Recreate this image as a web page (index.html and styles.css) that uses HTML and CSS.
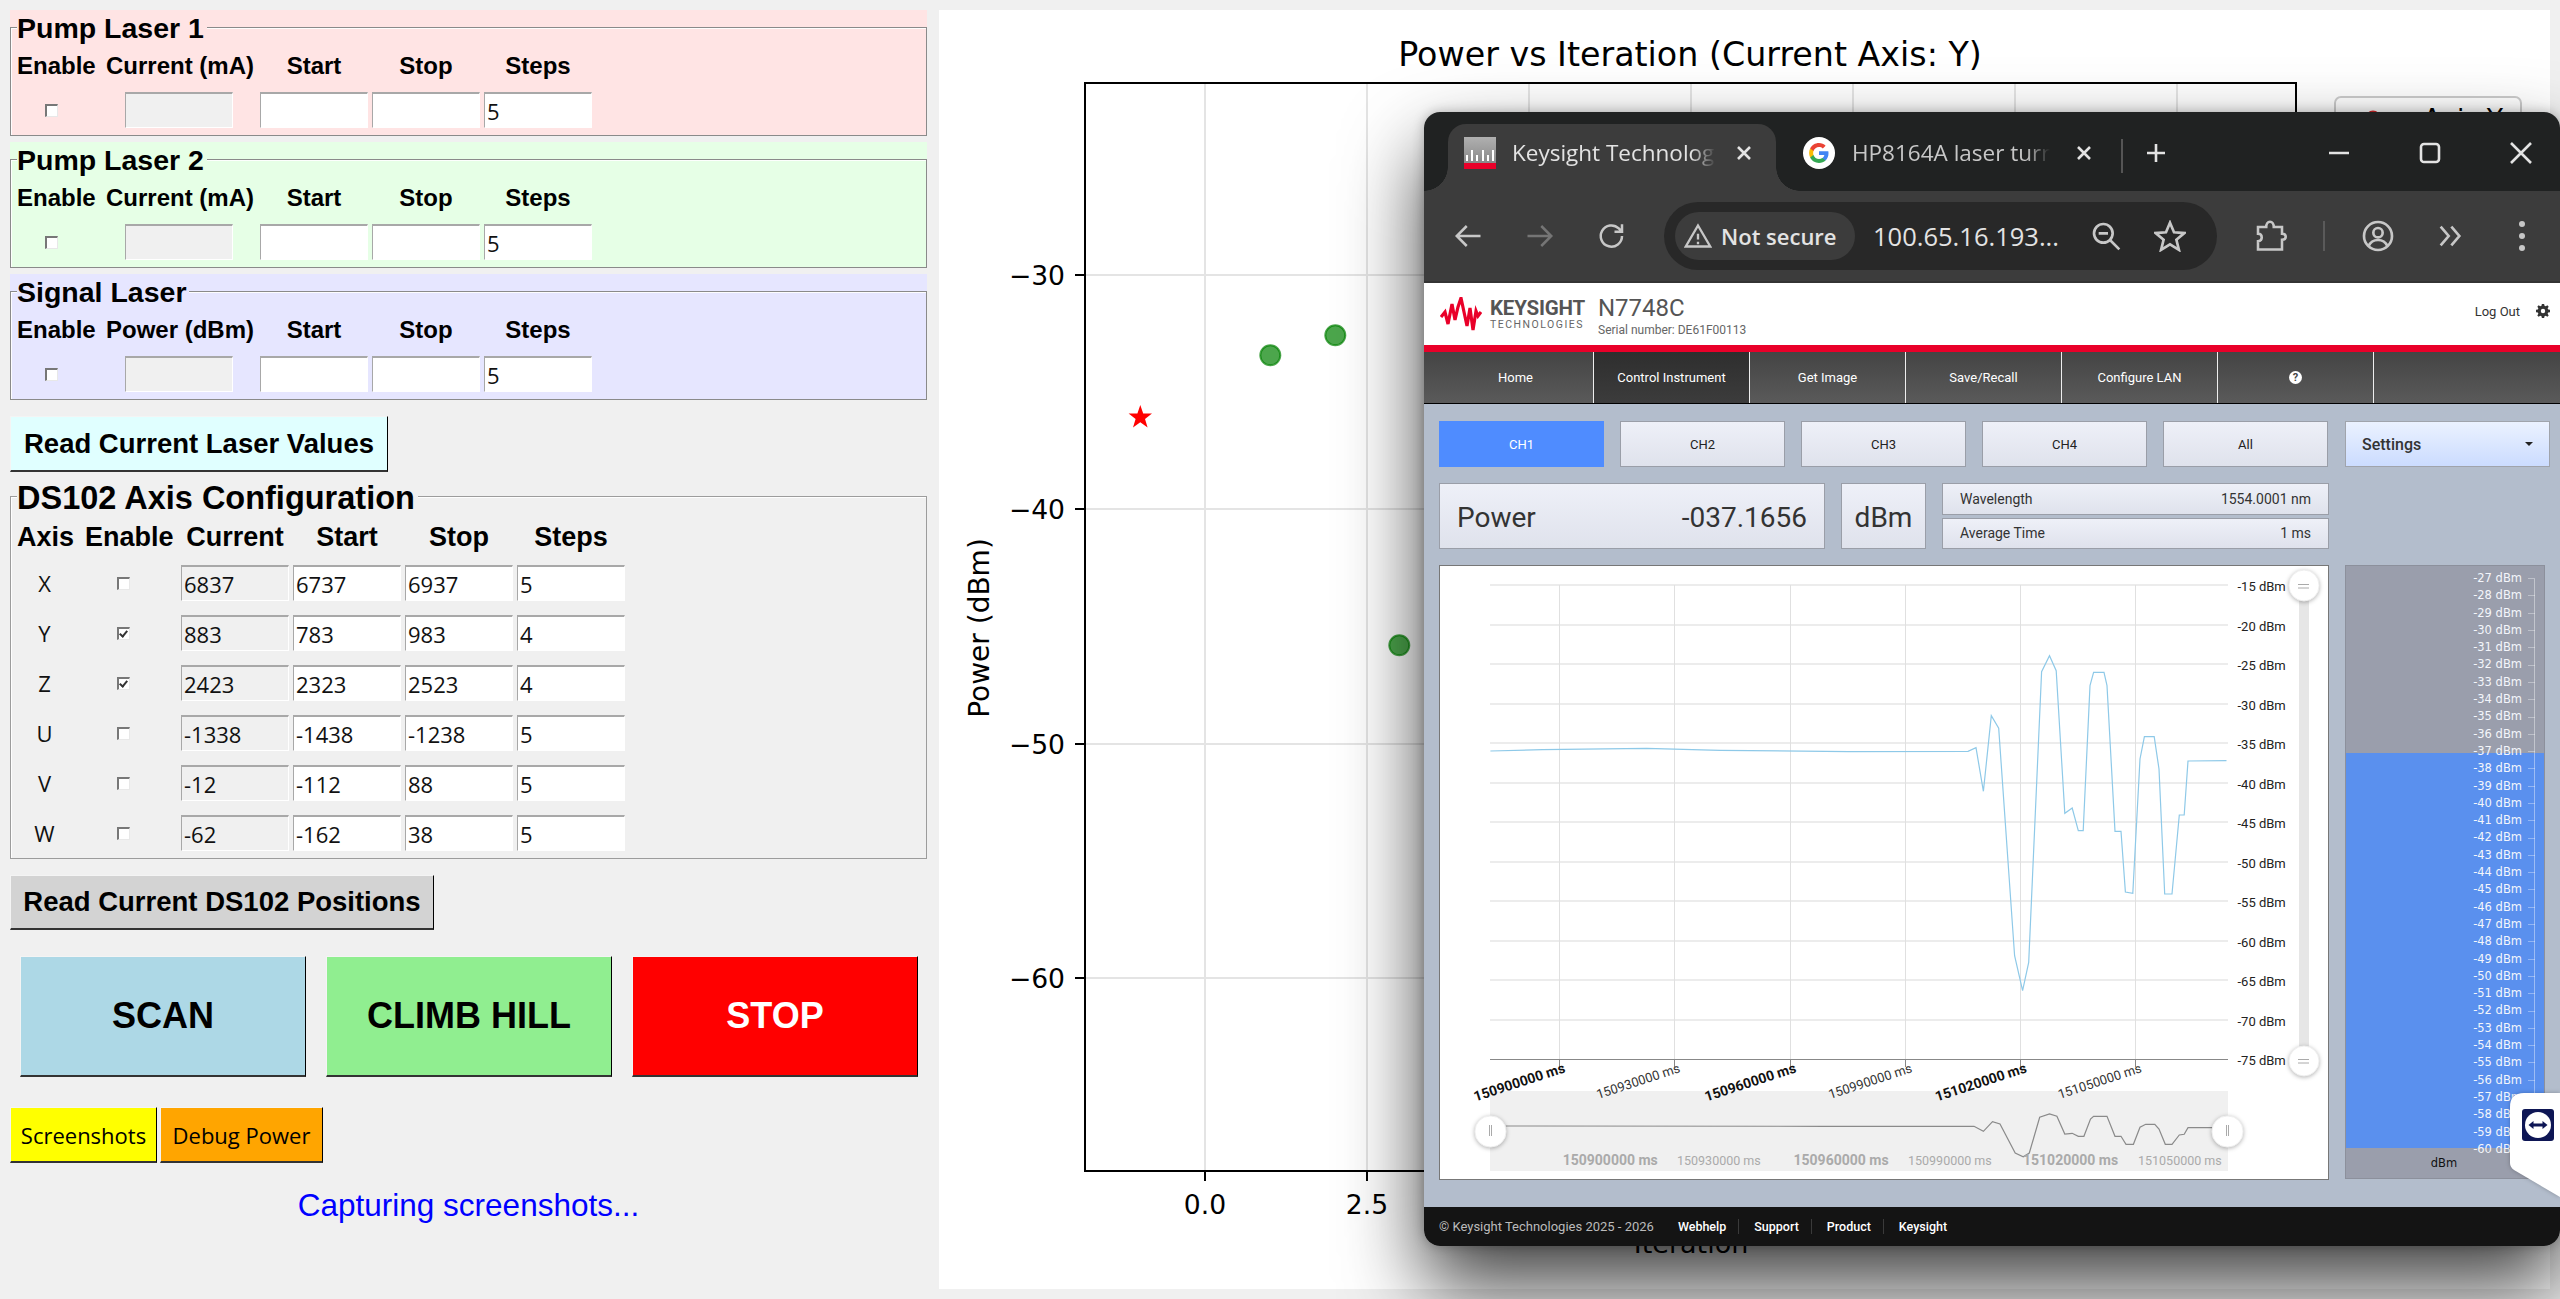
FILE: index.html
```html
<!DOCTYPE html>
<html>
<head>
  <title>Laser Control</title>
  <link rel="stylesheet" href="styles.css">
</head>
<body>
  <div class="panel">
    <div class="frame pump1">
      <div class="group">
        <div class="group-title">Pump Laser 1</div>
        <div class="laser-grid">
          <div class="head left">Enable</div><div class="head left">Current (mA)</div><div class="head">Start</div><div class="head">Stop</div><div class="head">Steps</div>
          <div class="chk"></div><div class="entry off current"></div><div class="entry"></div><div class="entry"></div><div class="entry">5</div>
        </div>
      </div>
    </div>
    <div class="frame pump2">
      <div class="group">
        <div class="group-title">Pump Laser 2</div>
        <div class="laser-grid">
          <div class="head left">Enable</div><div class="head left">Current (mA)</div><div class="head">Start</div><div class="head">Stop</div><div class="head">Steps</div>
          <div class="chk"></div><div class="entry off current"></div><div class="entry"></div><div class="entry"></div><div class="entry">5</div>
        </div>
      </div>
    </div>
    <div class="frame signal">
      <div class="group">
        <div class="group-title">Signal Laser</div>
        <div class="laser-grid">
          <div class="head left">Enable</div><div class="head left">Power (dBm)</div><div class="head">Start</div><div class="head">Stop</div><div class="head">Steps</div>
          <div class="chk"></div><div class="entry off current"></div><div class="entry"></div><div class="entry"></div><div class="entry">5</div>
        </div>
      </div>
    </div>

    <button class="btn read-laser">Read Current Laser Values</button>

    <div class="frame axes">
      <div class="group">
        <div class="group-title big">DS102 Axis Configuration</div>
        <div class="axis-grid">
          <div class="head left">Axis</div><div class="head left enable-head">Enable</div><div class="head">Current</div><div class="head">Start</div><div class="head">Stop</div><div class="head">Steps</div>

          <div class="axis-name">X</div><div class="chk"></div><div class="entry off">6837</div><div class="entry">6737</div><div class="entry">6937</div><div class="entry">5</div>
          <div class="axis-name">Y</div><div class="chk checked"></div><div class="entry off">883</div><div class="entry">783</div><div class="entry">983</div><div class="entry">4</div>
          <div class="axis-name">Z</div><div class="chk checked"></div><div class="entry off">2423</div><div class="entry">2323</div><div class="entry">2523</div><div class="entry">4</div>
          <div class="axis-name">U</div><div class="chk"></div><div class="entry off">-1338</div><div class="entry">-1438</div><div class="entry">-1238</div><div class="entry">5</div>
          <div class="axis-name">V</div><div class="chk"></div><div class="entry off">-12</div><div class="entry">-112</div><div class="entry">88</div><div class="entry">5</div>
          <div class="axis-name">W</div><div class="chk"></div><div class="entry off">-62</div><div class="entry">-162</div><div class="entry">38</div><div class="entry">5</div>
        </div>
      </div>
    </div>

    <button class="btn read-axes">Read Current DS102 Positions</button>

    <div class="big-buttons">
      <button class="btn big scan">SCAN</button>
      <button class="btn big climb">CLIMB HILL</button>
      <button class="btn big stop">STOP</button>
    </div>

    <div class="small-buttons">
      <button class="btn small shots">Screenshots</button>
      <button class="btn small debug">Debug Power</button>
    </div>

    <div class="status">Capturing screenshots...</div>
  </div>

  <div class="plot">
    <svg class="plot-svg" viewBox="939 10 1611 1279" width="1611" height="1279">
      <g class="grid">
        <path d="M1205 83V1171M1367 83V1171M1529 83V1171M1691 83V1171M1853 83V1171M2015 83V1171M2177 83V1171"/>
        <path d="M1085 275H2296M1085 509H2296M1085 744H2296M1085 978H2296"/>
      </g>
      <rect class="axes-box" x="1085" y="83" width="1211" height="1088"/>
      <path class="axes-tick" d="M1075 275H1085M1075 509H1085M1075 744H1085M1075 978H1085M1205 1171V1181M1367 1171V1181"/>
      <text class="plot-title" x="1690" y="66">Power vs Iteration (Current Axis: Y)</text>
      <text class="tick-y" x="1065" y="285">−30</text>
      <text class="tick-y" x="1065" y="519">−40</text>
      <text class="tick-y" x="1065" y="754">−50</text>
      <text class="tick-y" x="1065" y="988">−60</text>
      <text class="tick-x" x="1205" y="1214">0.0</text>
      <text class="tick-x" x="1367" y="1214">2.5</text>
      <text class="plot-ylabel" transform="rotate(-90 989 628)" x="989" y="628">Power (dBm)</text>
      <text class="plot-xlabel" x="1691" y="1253">Iteration</text>
      <circle class="pt" cx="1270.3" cy="355.3" r="10"/>
      <circle class="pt" cx="1335.3" cy="335.3" r="10"/>
      <circle class="pt" cx="1399.3" cy="645.3" r="10"/>
      <polygon class="best" points="1140.3,405 1143.2,413.5 1152,413.5 1145,418.9 1147.6,427.5 1140.3,422.3 1133,427.5 1135.6,418.9 1128.6,413.5 1137.4,413.5"/>
      <rect class="legend-box" x="2335" y="97" width="186" height="70" rx="6"/>
      <circle class="legend-dot" cx="2373" cy="118" r="7.5"/>
      <text class="legend-text" x="2423" y="127.6">Axis Y</text>
    </svg>
  </div>

  <div class="window">
    <div class="tabstrip">
      <div class="tab active">
        <div class="favicon"><span></span><span></span><span></span><span></span><span></span><span></span></div>
        <div class="tab-title">Keysight Technologies</div>
        <svg class="tab-x" viewBox="0 0 16 16"><path d="M2 2L14 14M14 2L2 14"/></svg>
      </div>
      <div class="tab">
        <svg class="g-icon" viewBox="0 0 32 32">
          <circle cx="16" cy="16" r="16" fill="#fff"/>
          <g transform="translate(5.2 5.2) scale(.9)">
            <path fill="#4285F4" d="M22.56 12.25c0-.78-.07-1.53-.2-2.25H12v4.26h5.92c-.26 1.37-1.04 2.53-2.21 3.31v2.77h3.57c2.08-1.92 3.28-4.74 3.28-8.09z"/>
            <path fill="#34A853" d="M12 23c2.97 0 5.46-.98 7.28-2.66l-3.57-2.77c-.98.66-2.23 1.06-3.71 1.06-2.86 0-5.29-1.93-6.16-4.53H2.18v2.84C3.99 20.53 7.7 23 12 23z"/>
            <path fill="#FBBC05" d="M5.84 14.09c-.22-.66-.35-1.36-.35-2.09s.13-1.43.35-2.09V7.07H2.18C1.43 8.55 1 10.22 1 12s.43 3.45 1.18 4.93l2.85-2.22.81-.62z"/>
            <path fill="#EA4335" d="M12 5.38c1.62 0 3.06.56 4.21 1.64l3.15-3.15C17.45 2.09 14.97 1 12 1 7.7 1 3.99 3.47 2.18 7.07l3.66 2.84c.87-2.6 3.3-4.53 6.16-4.53z"/>
          </g>
        </svg>
        <div class="tab-title dim">HP8164A laser turn on</div>
        <svg class="tab-x" viewBox="0 0 16 16"><path d="M2 2L14 14M14 2L2 14"/></svg>
      </div>
      <div class="tab-sep"></div>
      <svg class="plus" viewBox="0 0 20 20"><path d="M10 1V19M1 10H19"/></svg>
      <div class="win-btns">
        <div class="win-btn"><svg viewBox="0 0 20 20"><path d="M0 10H20"/></svg></div>
        <div class="win-btn"><svg viewBox="0 0 20 20"><rect x="1" y="1" width="18" height="18" rx="3"/></svg></div>
        <div class="win-btn"><svg viewBox="0 0 20 20"><path d="M0 0L20 20M20 0L0 20"/></svg></div>
      </div>
    </div>

    <div class="toolbar">
      <div class="tool"><svg viewBox="0 0 24 24"><path d="M22 12H3M11 4L3 12L11 20"/></svg></div>
      <div class="tool faint"><svg viewBox="0 0 24 24"><path d="M2 12H21M13 4L21 12L13 20"/></svg></div>
      <div class="tool"><svg viewBox="0 0 24 24"><path d="M20 12a8.500 8.500 0 1 1-2.600-6.100L20 8.500M20 2.500V8.500H14"/></svg></div>
      <div class="omnibox">
        <div class="chip">
          <svg viewBox="0 0 24 24"><path d="M12 3L22.500 21H1.500Z"/><path d="M12 10V15M12 17V19"/></svg>
          <span>Not secure</span>
        </div>
        <div class="url">100.65.16.193...</div>
        <div class="omni-btn"><svg class="ico-32" viewBox="0 0 24 24"><circle cx="10" cy="10" r="7"/><path d="M15 15L22 22M6.500 10H13.500"/></svg></div>
        <div class="omni-btn"><svg class="ico-32" viewBox="0 0 24 24"><path d="M12 2L15 9.200L22.800 9.800L16.800 14.800L18.700 22.400L12 18.300L5.300 22.400L7.200 14.800L1.200 9.800L9 9.200Z"/></svg></div>
      </div>
      <div class="tool ext"><svg class="ico-36" viewBox="0 0 24 24"><path d="M4 6H9.500C9.500 4 10.500 2.500 12 2.500S14.500 4 14.500 6H20V10.500C22 10.500 22.500 11.300 22.500 12.500S22 14.500 20 14.500V21H4V15.500C6 15.500 6.500 14 6.500 13S6 10.500 4 10.500Z"/></svg></div>
      <div class="tool-sep"></div>
      <div class="tool"><svg class="ico-32" viewBox="0 0 24 24"><circle cx="12" cy="12" r="10.500"/><circle cx="12" cy="9.500" r="3.500"/><path d="M5 19.500C6.500 16 9 15 12 15S17.500 16 19 19.500"/></svg></div>
      <div class="tool"><svg class="ico-32" viewBox="0 0 24 24"><path d="M5 5L11 12L5 19M13 5L19 12L13 19"/></svg></div>
      <div class="tool"><svg class="ico-36" viewBox="0 0 24 24"><circle class="solid" cx="12" cy="4" r="2"/><circle class="solid" cx="12" cy="12" r="2"/><circle class="solid" cx="12" cy="20" r="2"/></svg></div>
    </div>

    <div class="page">
      <div class="ks-header">
        <svg class="ks-logo" viewBox="0 0 42 36"><path d="M1 20L5 15L8 27L12 7L15 23L18 10L21 1L24 15L27 29L30 11L33 33L36 14L38 19L41 15"/></svg>
        <div class="ks-brand">
          <div class="ks-name">KEYSIGHT</div>
          <div class="ks-sub">TECHNOLOGIES</div>
        </div>
        <div class="ks-model">
          <div class="ks-n">N7748C</div>
          <div class="ks-serial">Serial number: DE61F00113</div>
        </div>
        <div class="ks-logout">Log Out</div>
        <svg class="ks-gear" viewBox="0 0 16 16"><path d="M6.700 0H9.300L9.700 2.100L11.200 2.700L13 1.500L14.500 3L13.300 4.800L13.900 6.300L16 6.700V9.300L13.900 9.700L13.300 11.200L14.500 13L13 14.500L11.200 13.300L9.700 13.900L9.300 16H6.700L6.300 13.900L4.800 13.300L3 14.500L1.500 13L2.700 11.200L2.100 9.700L0 9.300V6.700L2.100 6.300L2.700 4.800L1.500 3L3 1.500L4.800 2.700L6.300 2.100ZM8 5.500A2.500 2.500 0 1 0 8 10.500A2.500 2.500 0 1 0 8 5.500Z" fill-rule="evenodd"/></svg>
      </div>

      <div class="ks-nav">
        <div class="nav-item home">Home</div>
        <div class="nav-item on">Control Instrument</div>
        <div class="nav-item">Get Image</div>
        <div class="nav-item">Save/Recall</div>
        <div class="nav-item">Configure LAN</div>
        <div class="nav-item"><span class="help">?</span></div>
        <div class="nav-rest"></div>
      </div>

      <div class="ks-main">
        <div class="channels">
          <div class="ch on">CH1</div>
          <div class="ch">CH2</div>
          <div class="ch">CH3</div>
          <div class="ch">CH4</div>
          <div class="ch">All</div>
        </div>
        <div class="settings"><span>Settings</span><span class="caret"></span></div>

        <div class="readout">
          <div class="box power"><span>Power</span><span>-037.1656</span></div>
          <div class="box unit">dBm</div>
          <div class="info">
            <div class="box info-row"><span>Wavelength</span><span>1554.0001 nm</span></div>
            <div class="box info-row"><span>Average Time</span><span>1 ms</span></div>
          </div>
        </div>
        <div class="gap-cell"></div>

        <div class="chart">
          <svg viewBox="1440 567 888 613" width="888" height="613">
            <path class="chart-grid" d="M1490 586H2228M1490 626H2228M1490 665H2228M1490 705H2228M1490 744H2228M1490 784H2228M1490 823H2228M1490 863H2228M1490 902H2228M1490 942H2228M1490 981H2228M1490 1021H2228"/>
            <path class="chart-vgrid" d="M1559.500 586V1060M1674.500 586V1060M1790.500 586V1060M1905.500 586V1060M2020.500 586V1060M2135.500 586V1060"/>
            <path class="chart-axis" d="M1490 1060.500H2228M1559.500 1060V1068M1674.500 1060V1068M1790.500 1060V1068M1905.500 1060V1068M2020.500 1060V1068M2135.500 1060V1068"/>
            <polyline class="curve" points="1490.400,752 1542.500,750.700 1646.600,749.300 1720,751.300 1848.700,752.700 1968,752.300 1976,748.700 1983.400,792.300 1991.300,716.700 1998.700,729.300 2014.600,956.700 2022.600,991.700 2028.700,963.300 2032.400,880 2041.600,672.700 2049.500,656.700 2056.200,671.700 2064.800,814.300 2072.200,809 2078.300,831.700 2083.200,831.700 2090,686.700 2093.600,673.300 2104,673.300 2107,686.700 2115,832.300 2121,832.300 2125.400,893 2132.800,894.300 2140,760 2144.400,737.700 2154.200,737.700 2159,770 2164.700,895 2172,895 2179.300,816 2184.200,816 2188,762 2226.500,761.700"/>
            <text class="y-label" x="2237.500" y="592">-15 dBm</text>
            <text class="y-label" x="2237.500" y="632">-20 dBm</text>
            <text class="y-label" x="2237.500" y="671">-25 dBm</text>
            <text class="y-label" x="2237.500" y="711">-30 dBm</text>
            <text class="y-label" x="2237.500" y="750">-35 dBm</text>
            <text class="y-label" x="2237.500" y="790">-40 dBm</text>
            <text class="y-label" x="2237.500" y="829">-45 dBm</text>
            <text class="y-label" x="2237.500" y="869">-50 dBm</text>
            <text class="y-label" x="2237.500" y="908">-55 dBm</text>
            <text class="y-label" x="2237.500" y="948">-60 dBm</text>
            <text class="y-label" x="2237.500" y="987">-65 dBm</text>
            <text class="y-label" x="2237.500" y="1027">-70 dBm</text>
            <text class="y-label" x="2237.500" y="1066">-75 dBm</text>

            <rect class="slider-track" x="2299" y="590" width="10" height="470"/>
            <rect class="thumb" x="2289" y="571" width="30" height="31" rx="15"/>
            <rect class="thumb" x="2289" y="1047" width="30" height="30" rx="15"/>
            <path class="thumb-mark" d="M2298 585.500H2309M2298 589H2309M2298 1060.500H2309M2298 1064H2309"/>

            <rect class="navigator" x="1490" y="1092" width="738" height="80"/>
            <polyline class="mini" points="1505.700,1127 1824,1127.300 1974,1127.300 1983.400,1132.300 1992.500,1122.700 2000,1125 2015.200,1154 2023.200,1157.700 2029.300,1154 2039.700,1118.300 2049.500,1115 2056.900,1117.300 2064.800,1135 2072.200,1134.300 2078.300,1137.300 2083.900,1137.300 2090.500,1120 2093.600,1117.300 2107,1117.300 2115,1137.300 2121,1137.300 2126,1145.300 2133.400,1145.300 2140,1128.300 2145.700,1125.300 2154.800,1125.300 2159,1130 2165.300,1145.300 2172,1145.300 2179.300,1136 2184.200,1135.300 2188,1128.700 2213,1128.700"/>
            <text class="nav-label bold" x="1562.700" y="1166">150900000 ms</text>
            <text class="nav-label" x="1677" y="1166">150930000 ms</text>
            <text class="nav-label bold" x="1793.500" y="1166">150960000 ms</text>
            <text class="nav-label" x="1908" y="1166">150990000 ms</text>
            <text class="nav-label bold" x="2023" y="1166">151020000 ms</text>
            <text class="nav-label" x="2138" y="1166">151050000 ms</text>
            <rect class="thumb" x="1475" y="1117" width="31" height="31" rx="15"/>
            <rect class="thumb" x="2212" y="1117" width="31" height="31" rx="15"/>
            <path class="thumb-mark" d="M1489.500 1126V1137M1491.500 1126V1137M2226.500 1126V1137M2228.500 1126V1137"/>

            <text class="x-label bold" transform="rotate(-18 1566 1073)" x="1566" y="1073">150900000 ms</text>
            <text class="x-label" transform="rotate(-18 1681 1073)" x="1681" y="1073">150930000 ms</text>
            <text class="x-label bold" transform="rotate(-18 1797 1073)" x="1797" y="1073">150960000 ms</text>
            <text class="x-label" transform="rotate(-18 1913 1073)" x="1913" y="1073">150990000 ms</text>
            <text class="x-label bold" transform="rotate(-18 2027.500 1073)" x="2027.500" y="1073">151020000 ms</text>
            <text class="x-label" transform="rotate(-18 2142.500 1073)" x="2142.500" y="1073">151050000 ms</text>
          </svg>
        </div>

        <div class="meter">
          <div class="meter-fill"></div>
          <ul class="scale">
            <li>-27 dBm</li><li>-28 dBm</li><li>-29 dBm</li><li>-30 dBm</li><li>-31 dBm</li><li>-32 dBm</li>
            <li>-33 dBm</li><li>-34 dBm</li><li>-35 dBm</li><li>-36 dBm</li><li>-37 dBm</li><li>-38 dBm</li>
            <li>-39 dBm</li><li>-40 dBm</li><li>-41 dBm</li><li>-42 dBm</li><li>-43 dBm</li><li>-44 dBm</li>
            <li>-45 dBm</li><li>-46 dBm</li><li>-47 dBm</li><li>-48 dBm</li><li>-49 dBm</li><li>-50 dBm</li>
            <li>-51 dBm</li><li>-52 dBm</li><li>-53 dBm</li><li>-54 dBm</li><li>-55 dBm</li><li>-56 dBm</li>
            <li>-57 dBm</li><li>-58 dBm</li><li>-59 dBm</li><li>-60 dBm</li>
          </ul>
          <div class="meter-unit">dBm</div>
        </div>
      </div>

      <div class="ks-footer">
        <span class="copy">© Keysight Technologies 2025 - 2026</span>
        <span class="flink">Webhelp</span>
        <span class="flink">Support</span>
        <span class="flink">Product</span>
        <span class="flink last">Keysight</span>
      </div>
    </div>
  </div>

  <svg class="tv-tab" viewBox="0 0 50 104" width="50" height="104">
    <path d="M50 0H14Q0 0 0 14V70Q0 74 4 77L50 104Z" fill="#fff"/>
    <rect x="12" y="16" width="32" height="32" rx="3" fill="#0e1655"/>
    <circle cx="28" cy="32" r="13" fill="#fff"/>
    <path d="M18.500 32L23.500 28V30.500H32.500V28L37.500 32L32.500 36V33.500H23.500V36Z" fill="#0e1655"/>
  </svg>
</body>
</html>
```

FILE: styles.css
```css
body {
  margin: 0;
  width: 2560px;
  height: 1299px;
  overflow: hidden;
  display: flex;
  background-color: #f0f0f0;
  font-family: "Liberation Sans", Arial, sans-serif;
  position: relative;
}

.panel {
  width: 917px;
  margin: 10px 12px 0 10px;
  flex: none;
}

/* laser frames */
.frame {
  padding-top: 17px;
  margin-bottom: 6px;
}

.pump1 { background-color: #ffe4e4; }
.pump2 { background-color: #e6ffe6; }
.signal { background-color: #e6e6ff; }

.group {
  border: 1px solid #8a8a8a;
  box-shadow: inset 1px 1px 0 rgba(255, 255, 255, .9);
  background-color: inherit;
  padding: 1px 0 7px 6px;
}

.frame .group { background: inherit; }

.group-title {
  font-size: 28.5px;
  font-weight: bold;
  line-height: 36px;
  margin: -19px 0 4px 0;
  width: fit-content;
  background: inherit;
  padding-right: 3px;
}

.group-title.big {
  font-size: 32.5px;
  line-height: 40px;
  margin: -20px 0 0 0;
  background-color: #f0f0f0;
}

.axes { padding-top: 0; margin-top: 24px; margin-bottom: 0; }
.axes .group { border-color: #9c9c9c; }

.laser-grid {
  display: grid;
  grid-template-columns: 85px 150px 108px 108px 108px;
  column-gap: 4px;
  row-gap: 10px;
  grid-template-rows: 32px 36px;
}

.axis-grid {
  display: grid;
  grid-template-columns: 55px 101px 108px 108px 108px 108px;
  column-gap: 4px;
  row-gap: 14px;
  grid-template-rows: 33px repeat(6, 36px);
}

.axis-grid .enable-head { padding-left: 9px; }

.head {
  font-size: 24px;
  font-weight: bold;
  text-align: center;
  line-height: 32px;
  white-space: nowrap;
}

.axis-grid .head { font-size: 27px; line-height: 38px; }
.head.left { text-align: left; }

.entry {
  box-sizing: border-box;
  height: 36px;
  background-color: #fff;
  border: 1px solid #fff;
  border-top: 2px solid #a8a8a8;
  border-left: 1px solid #a8a8a8;
  font-family: "Open Sans", sans-serif;
  font-size: 22px;
  line-height: 34px;
  padding-left: 2px;
  color: #111;
}

.entry.off { background-color: #f0f0f0; }
.entry.current { width: 108px; margin-left: 19px; }

.chk {
  box-sizing: border-box;
  width: 13px;
  height: 13px;
  align-self: center;
  margin-left: 28px;
  background-color: #fff;
  border-top: 2px solid #777;
  border-left: 2px solid #777;
  border-right: 1px solid #e8e8e8;
  border-bottom: 1px solid #e8e8e8;
}

.axis-grid .chk {
  margin-left: 41px;
  align-self: start;
  margin-top: 12px;
}

.chk.checked {
  position: relative;
}

.chk.checked::after {
  content: "";
  position: absolute;
  left: 2px;
  top: 0;
  width: 3px;
  height: 6px;
  border-right: 2px solid #333;
  border-bottom: 2px solid #333;
  transform: rotate(40deg);
}

.axis-name {
  font-family: "Open Sans", sans-serif;
  font-size: 22px;
  text-align: center;
  line-height: 36px;
  color: #111;
}

/* tk style buttons */
.btn {
  display: block;
  box-sizing: border-box;
  padding: 0;
  border-style: solid;
  border-width: 1px 1px 2px 1px;
  border-color: #f4f4f4 #000 #333 #f4f4f4;
  font-family: "Liberation Sans", Arial, sans-serif;
  color: #000;
}

.read-laser {
  width: 378px;
  height: 56px;
  margin-top: 16px;
  font-size: 27.5px;
  font-weight: bold;
  background-color: #e0ffff;
}

.read-axes {
  width: 424px;
  height: 55px;
  margin-top: 16px;
  font-size: 27.5px;
  font-weight: bold;
  background-color: #d3d3d3;
}

.big-buttons {
  display: flex;
  gap: 20px;
  margin: 26px 0 0 10px;
}

.btn.big {
  width: 286px;
  height: 121px;
  font-size: 36px;
  font-weight: bold;
}

.scan { background-color: #add8e6; }
.climb { background-color: #90ee90; }
.stop { background-color: #ff0000; color: #fff; }

.small-buttons {
  display: flex;
  gap: 3px;
  margin-top: 30px;
}

.btn.small {
  height: 56px;
  font-family: "Open Sans", sans-serif;
  font-size: 22px;
}

.shots { width: 147px; background-color: #ffff00; }
.debug { width: 163px; background-color: #ffa500; }

.status {
  margin-top: 24px;
  text-align: center;
  color: #0000ff;
  font-size: 31.5px;
  line-height: 36px;
}

/* matplotlib figure */
.plot {
  width: 1611px;
  height: 1279px;
  margin-top: 10px;
  flex: none;
  background-color: #fff;
}

.plot-svg { display: block; }

.plot-svg text {
  font-family: "DejaVu Sans", sans-serif;
  fill: #000;
}

.grid path { stroke: #e4e4e4; stroke-width: 2; fill: none; }
.axes-box { fill: none; stroke: #000; stroke-width: 2; }
.axes-tick { stroke: #000; stroke-width: 2; fill: none; }
.plot-svg .plot-title { font-size: 33.3px; text-anchor: middle; }
.plot-svg .tick-y { font-size: 26.6px; text-anchor: end; }
.plot-svg .tick-x { font-size: 26.6px; text-anchor: middle; }
.plot-svg .plot-ylabel { font-size: 28px; text-anchor: middle; }
.plot-svg .plot-xlabel { font-size: 27px; text-anchor: middle; }
.pt { fill: rgba(0, 128, 0, 0.7); stroke: rgba(0, 128, 0, 0.7); stroke-width: 2; }
.best { fill: #ff0000; }
.legend-box { fill: #fff; stroke: #ccc; stroke-width: 2; }
.legend-dot { fill: #d62728; }
.plot-svg .legend-text { font-size: 26.6px; }

/* browser window on top of the plot */
.window {
  position: absolute;
  left: 1424px;
  top: 112px;
  width: 1136px;
  height: 1134px;
  border-radius: 16px;
  overflow: hidden;
  display: flex;
  flex-direction: column;
  box-shadow: 0 40px 80px rgba(0, 0, 0, .75), 0 0 12px rgba(0, 0, 0, .25);
}

.tabstrip {
  height: 79px;
  flex: none;
  background-color: #202222;
  display: flex;
  align-items: flex-end;
  padding-left: 24px;
  box-sizing: border-box;
  color: #e3e3e3;
  font-family: "Open Sans", sans-serif;
}

.tab {
  width: 328px;
  height: 67px;
  flex: none;
  display: flex;
  align-items: center;
  box-sizing: border-box;
  padding: 0 0 10px 27px;
  position: relative;
}

.tab.active {
  padding-left: 16px;
  background-color: #3c3c3c;
  border-radius: 18px 18px 0 0;
}

.tab.active::before,
.tab.active::after {
  content: "";
  position: absolute;
  bottom: 0;
  width: 24px;
  height: 24px;
}

.tab.active::before {
  left: -24px;
  background: radial-gradient(circle at 0 0, transparent 23.5px, #3c3c3c 24px);
}

.tab.active::after {
  right: -24px;
  background: radial-gradient(circle at 100% 0, transparent 23.5px, #3c3c3c 24px);
}

.favicon {
  width: 32px;
  height: 32px;
  flex: none;
  box-sizing: border-box;
  background: linear-gradient(#b0b0b0, #8a8a8a 80%, #e90029 80%);
  display: flex;
  align-items: flex-end;
  justify-content: space-between;
  padding: 0 2px 8px;
}

.favicon span {
  width: 2px;
  height: 6px;
  background-color: #fff;
}

.favicon span:nth-child(2n) { height: 11px; }

.tab-title {
  width: 204px;
  margin-left: 16px;
  font-size: 22.5px;
  white-space: nowrap;
  overflow: hidden;
  -webkit-mask-image: linear-gradient(to right, #000 88%, transparent);
  mask-image: linear-gradient(to right, #000 88%, transparent);
}

.tab-title.dim { color: #c7c7c7; margin-left: 17px; width: 198px; }

.tab-x {
  width: 16px;
  height: 16px;
  margin-left: 20px;
  flex: none;
}

.tab .dim + .tab-x { margin-left: 26px; }

.tab-x path,
.plus path,
.win-btn path,
.win-btn rect {
  stroke: #e3e3e3;
  stroke-width: 2.6;
  fill: none;
}

.g-icon { width: 32px; height: 32px; flex: none; }

.tab-sep {
  width: 2px;
  height: 34px;
  background-color: #555;
  margin: 0 0 18px 17px;
  flex: none;
}

.plus {
  width: 20px;
  height: 20px;
  margin: 0 0 28px 23px;
  flex: none;
}

.win-btns {
  display: flex;
  margin: 0 -6px 28px auto;
  align-items: center;
}

.win-btn {
  width: 91px;
  display: flex;
  justify-content: center;
}

.win-btn svg { width: 20px; height: 20px; overflow: visible; }

.toolbar {
  height: 92px;
  flex: none;
  box-sizing: border-box;
  background-color: #3c3c3c;
  border-bottom: 2px solid #333;
  display: flex;
  align-items: center;
  padding-left: 8px;
  font-family: "Open Sans", sans-serif;
}

.tool {
  width: 72px;
  display: flex;
  justify-content: center;
  flex: none;
}

.tool svg,
.omni-btn svg {
  width: 30px;
  height: 30px;
}

.tool svg.ico-36,
.omni-btn svg.ico-36 { width: 36px; height: 36px; }
.tool svg.ico-32,
.omni-btn svg.ico-32 { width: 32px; height: 32px; }

.tool path,
.tool circle,
.omni-btn path,
.omni-btn circle,
.chip path {
  stroke: #c7c7c7;
  stroke-width: 2;
  fill: none;
}

.tool .ico-36 path { stroke-width: 1.7; }
.tool .solid { fill: #c7c7c7; stroke: none; }
.tool.faint path { stroke: #757575; }
.tool.ext { margin-left: 17px; }

.tool-sep {
  width: 2px;
  height: 30px;
  background-color: #5a5a5a;
  margin: 0 17px;
  flex: none;
}

.omnibox {
  width: 553px;
  height: 68px;
  margin-left: 16px;
  flex: none;
  box-sizing: border-box;
  background-color: #282828;
  border-radius: 34px;
  display: flex;
  align-items: center;
  padding: 0 15px 0 11px;
}

.chip {
  width: 180px;
  height: 48px;
  flex: none;
  box-sizing: border-box;
  background-color: #3c3c3c;
  border-radius: 24px;
  display: flex;
  align-items: center;
  padding-left: 9px;
  color: #e3e3e3;
  font-size: 22px;
  font-weight: 600;
  white-space: nowrap;
}

.chip svg { width: 28px; height: 28px; margin-right: 9px; flex: none; }

.url {
  width: 201px;
  margin-left: 18px;
  color: #e3e3e3;
  font-size: 25.5px;
  white-space: nowrap;
  flex: none;
}

.omni-btn {
  width: 64px;
  display: flex;
  justify-content: center;
  flex: none;
}

.page {
  flex: 1;
  display: flex;
  flex-direction: column;
  min-height: 0;
  font-family: Roboto, sans-serif;
}

.ks-header {
  height: 69px;
  flex: none;
  box-sizing: border-box;
  background-color: #fff;
  border-bottom: 7px solid #e90029;
  display: flex;
  align-items: center;
  padding: 2px 0 0 16px;
}

.ks-logo { width: 42px; height: 36px; flex: none; }
.ks-logo path { fill: none; stroke: #e90029; stroke-width: 3.2; }

.ks-brand { margin-left: 8px; width: 108px; flex: none; }

.ks-name {
  font-size: 20.5px;
  font-weight: 700;
  color: #555;
  line-height: 20px;
  letter-spacing: -.2px;
}

.ks-sub {
  font-size: 10.5px;
  color: #666;
  letter-spacing: 1.5px;
  line-height: 14px;
}

.ks-n { font-size: 24px; color: #555; line-height: 30px; }
.ks-serial { font-size: 12px; color: #666; line-height: 14px; }

.ks-logout {
  margin-left: auto;
  font-size: 13px;
  color: #333;
  margin-bottom: 8px;
}

.ks-gear {
  width: 14px;
  height: 14px;
  fill: #333;
  margin: 0 10px 8px 16px;
  flex: none;
}

.ks-nav {
  height: 52px;
  flex: none;
  box-sizing: border-box;
  display: flex;
  border-bottom: 1px solid #000;
  background: linear-gradient(#444, #5a5a5a);
  color: #fff;
  font-size: 13px;
}

.nav-item {
  width: 156px;
  flex: none;
  box-sizing: border-box;
  border-right: 1px solid #eee;
  display: flex;
  align-items: center;
  justify-content: center;
}

.nav-item.home { width: 170px; padding-left: 14px; }
.nav-item.on { background: linear-gradient(#2e2e2e, #3c3c3c); }
.nav-rest { flex: 1; }

.help {
  width: 13px;
  height: 13px;
  border-radius: 50%;
  background-color: #fff;
  color: #444;
  font-size: 11px;
  font-weight: 700;
  line-height: 13px;
  text-align: center;
}

.ks-main {
  flex: 1;
  min-height: 0;
  background-color: #b3bdcc;
  box-sizing: border-box;
  padding: 17px 0 0 15px;
  display: grid;
  grid-template-columns: 890px 205px;
  grid-template-rows: 46px 66px 615px;
  gap: 16px;
}

.channels {
  display: grid;
  grid-template-columns: repeat(5, 165px);
  column-gap: 16px;
}

.ch {
  box-sizing: border-box;
  border: 1px solid #9a9ea8;
  background: linear-gradient(#eef0f8, #dfe2ec);
  display: flex;
  align-items: center;
  justify-content: center;
  font-size: 13px;
  color: #222;
}

.ch.on { background: #4f8cff; border-color: #4f8cff; color: #fff; }

.settings {
  box-sizing: border-box;
  border: 1px solid #a0a4ac;
  background: linear-gradient(#ebf2ff, #cbdcff);
  display: flex;
  align-items: center;
  justify-content: space-between;
  padding: 0 16px;
  font-size: 16px;
  font-weight: 500;
  color: #333;
}

.caret {
  border-left: 4px solid transparent;
  border-right: 4px solid transparent;
  border-top: 4px solid #222;
}

.readout {
  display: flex;
  gap: 16px;
}

.box {
  box-sizing: border-box;
  border: 1px solid #9a9ea8;
  background: linear-gradient(#eef0f8, #dfe2ec);
  color: #333;
}

.power {
  width: 386px;
  flex: none;
  display: flex;
  align-items: center;
  justify-content: space-between;
  padding: 2px 17px 0;
  font-size: 28px;
}

.unit {
  width: 85px;
  flex: none;
  display: flex;
  align-items: center;
  justify-content: center;
  font-size: 28px;
  padding-top: 2px;
}

.info {
  flex: 1;
  display: flex;
  flex-direction: column;
  gap: 3px;
}

.info-row {
  flex: 1;
  display: flex;
  align-items: center;
  justify-content: space-between;
  padding: 0 17px;
  font-size: 14px;
}

.chart {
  box-sizing: border-box;
  border: 1px solid #777;
  background-color: #fff;
}

.chart svg { display: block; }
.chart text { font-family: Roboto, sans-serif; }

.chart-grid { stroke: #e6e6e6; stroke-width: 1.5; fill: none; }
.chart-vgrid { stroke: #e0e0e0; stroke-width: 1; fill: none; }
.chart-axis { stroke: #888; stroke-width: 1; fill: none; }
.curve { fill: none; stroke: #8ec9e8; stroke-width: 1.2; }
.mini { fill: none; stroke: #8a8a8a; stroke-width: 1.2; }
.y-label { font-size: 13px; fill: #222; }
.x-label { font-size: 13px; fill: #333; text-anchor: end; }
.x-label.bold { font-size: 14px; font-weight: 700; fill: #111; }
.slider-track { fill: #e6e6e6; }
.thumb { fill: #fff; stroke: #eee; filter: drop-shadow(0 1px 2px rgba(0, 0, 0, .3)); }
.thumb-mark { stroke: #aaa; stroke-width: 1; fill: none; }
.navigator { fill: #f0f0f0; }
.nav-label { font-size: 12.5px; fill: #aaa; }
.nav-label.bold { font-size: 14px; font-weight: 700; }

.meter {
  position: relative;
  box-sizing: border-box;
  width: 200px;
  height: 614px;
  border: 1px solid #8c909c;
  background-color: #9a9eac;
  font-family: "DejaVu Sans", sans-serif;
  font-size: 11.5px;
}

.meter-fill {
  position: absolute;
  left: 0;
  right: 0;
  top: 187px;
  bottom: 30px;
  background-color: #5a90ee;
}

.scale {
  position: relative;
  list-style: none;
  margin: 4px 9px 0 0;
  padding: 0;
  color: #f4f6fb;
}

.scale::before {
  content: "";
  position: absolute;
  right: 0;
  top: 9px;
  bottom: 9px;
  width: 1px;
  background-color: rgba(255, 255, 255, .4);
}

.scale li {
  height: 17.3px;
  line-height: 17.3px;
  display: flex;
  justify-content: flex-end;
  align-items: center;
  gap: 6px;
}

.scale li::after {
  content: "";
  width: 7px;
  height: 1px;
  background-color: rgba(255, 255, 255, .35);
}

.meter-unit {
  position: relative;
  text-align: center;
  color: #111;
  margin-top: -2px;
  padding-right: 2px;
}

.ks-footer {
  height: 39px;
  flex: none;
  background-color: #141414;
  display: flex;
  align-items: center;
  padding-left: 15px;
  font-size: 13px;
  color: #bbb;
}

.copy { margin-right: 24px; }

.flink {
  color: #fff;
  font-weight: 500;
  font-size: 12.5px;
  padding-right: 12px;
  margin-right: 15px;
  border-right: 1px solid #3a3a3a;
}

.flink.last { border-right: none; }

/* remote desktop tab pinned to the screen edge */
.tv-tab {
  position: absolute;
  right: 0;
  top: 1093px;
  filter: drop-shadow(0 0 2px rgba(0, 0, 0, .25));
}
```
